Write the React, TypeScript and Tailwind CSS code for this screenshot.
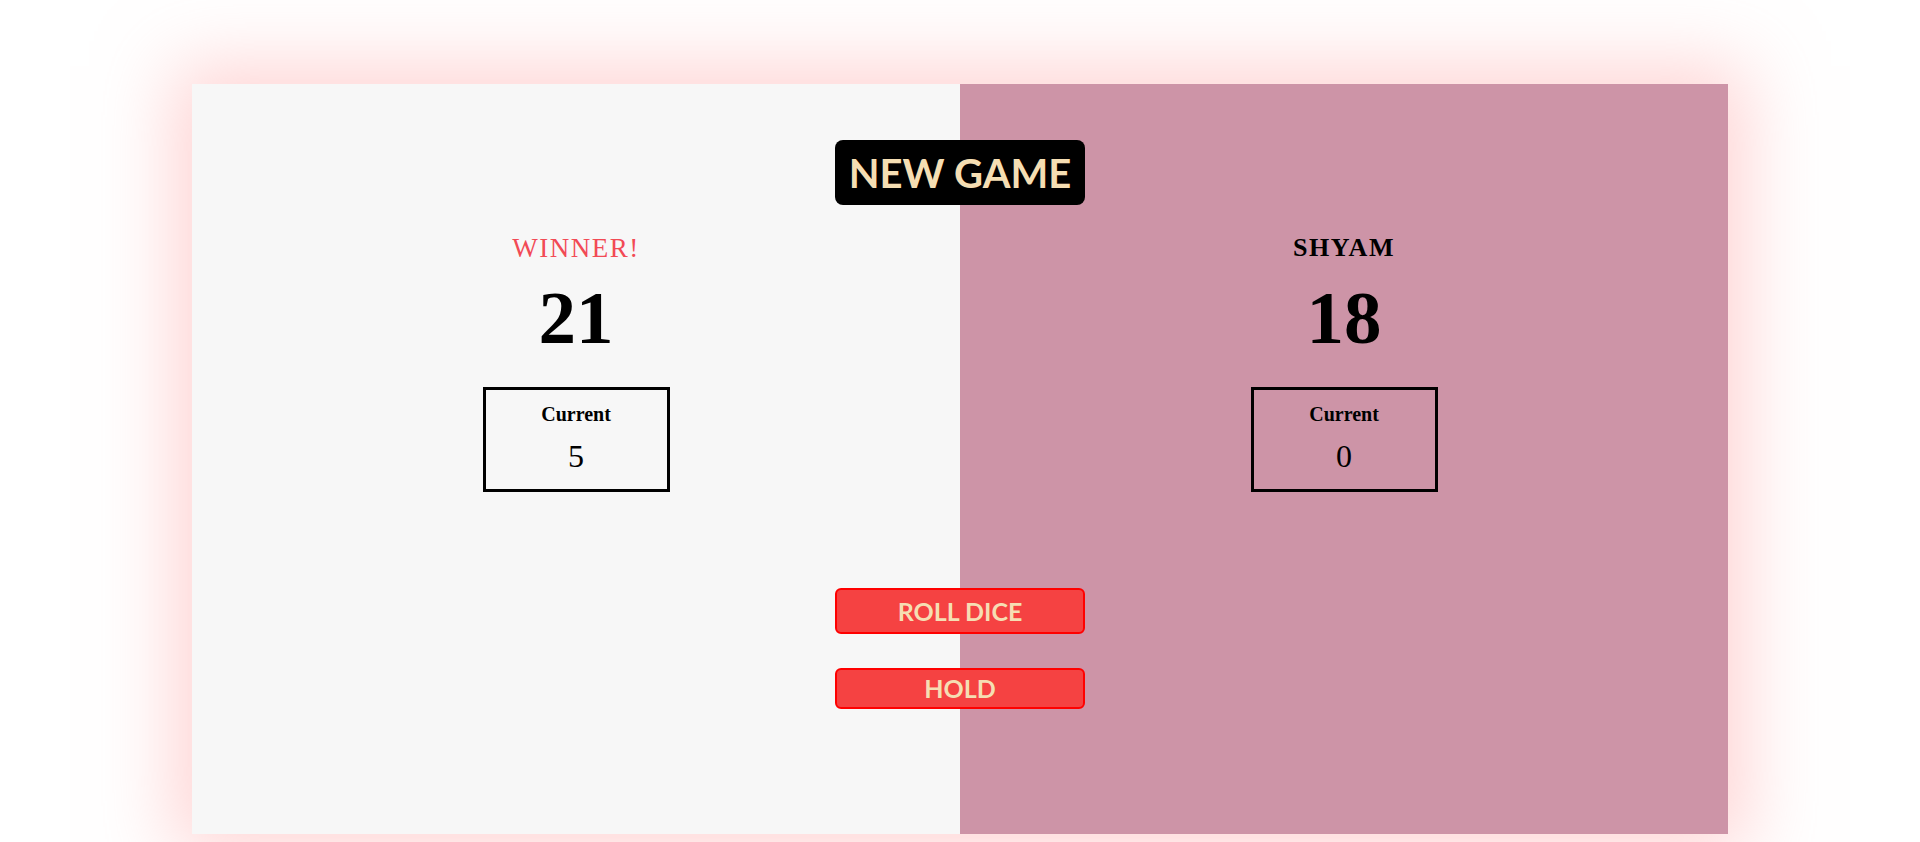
import React from "react";

function Player({
  name,
  score,
  current,
  winner,
  bg,
}: {
  name: string;
  score: number;
  current: number;
  winner?: boolean;
  bg: string;
}) {
  return (
    <section
      className={`flex-1 flex flex-col items-center pt-[149px] ${bg}`}
      style={{ fontFamily: '"Liberation Serif", "Times New Roman", serif' }}
    >
      <h2
        className={
          winner
            ? "text-[27px] leading-[30px] tracking-[1.5px] uppercase font-normal text-[#f24a55]"
            : "text-[26px] leading-[30px] tracking-[1.5px] uppercase font-bold text-black"
        }
      >
        {name}
      </h2>
      <p className="mt-[17px] text-[75px] leading-[75px] font-bold text-black">{score}</p>
      <div className="mt-[32px] w-[187px] h-[105px] border-[3px] border-black flex flex-col items-center pt-3">
        <p className="text-[20px] leading-[24px] font-bold text-black">Current</p>
        <p className="mt-[12px] text-[32px] leading-[36px] text-black">{current}</p>
      </div>
    </section>
  );
}

export default function App() {
  return (
    <div className="w-full min-h-[842px] bg-white overflow-hidden pt-[84px]">
      <main className="relative mx-auto w-[1536px] h-[750px] flex shadow-[0_0_70px_18px_rgba(255,170,170,0.5)]">
        <Player name="Winner!" score={21} current={5} winner bg="bg-[#f7f7f7]" />
        <Player name="Shyam" score={18} current={0} bg="bg-[#cd94a7]" />

        <button
          className="absolute left-1/2 -translate-x-1/2 top-[56px] w-[250px] h-[65px] rounded-[8px] bg-black text-[#f5deb3] text-[40px] leading-none font-bold flex items-center justify-center"
          style={{ fontFamily: 'Lato, "Noto Sans", sans-serif' }}
        >
          NEW GAME
        </button>

        <div
          className="absolute left-1/2 -translate-x-1/2 top-[504px] w-[250px] flex flex-col gap-[34px]"
          style={{ fontFamily: 'Lato, "Noto Sans", sans-serif' }}
        >
          <button className="w-full h-[46px] rounded-[6px] border-[2.5px] border-[#ff0000] bg-[#f54242] text-[#f5deb3] text-[25px] leading-none font-bold flex items-center justify-center">
            ROLL DICE
          </button>
          <button className="w-full h-[41px] rounded-[6px] border-[2.5px] border-[#ff0000] bg-[#f54242] text-[#f5deb3] text-[25px] leading-none font-bold flex items-center justify-center">
            HOLD
          </button>
        </div>
      </main>
    </div>
  );
}
